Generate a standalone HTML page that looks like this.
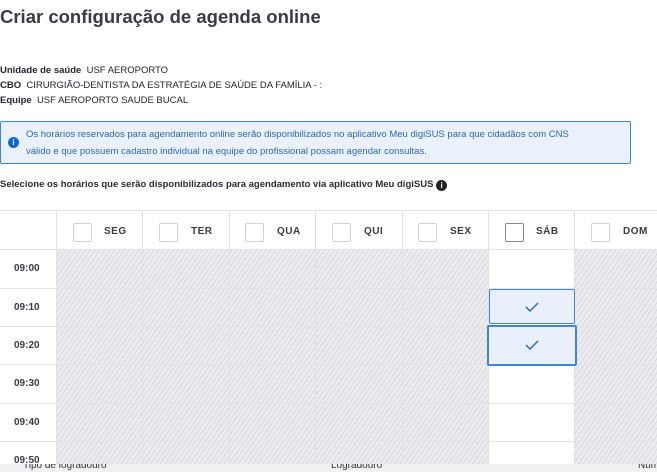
<!DOCTYPE html>
<html><head><meta charset="utf-8"><style>
*{margin:0;padding:0;box-sizing:border-box}
body{width:657px;height:472px;overflow:hidden;background:#fff;font-family:"Liberation Sans",sans-serif;color:#24252e;position:relative}
.a{position:absolute;white-space:nowrap}
.t{left:0;top:6px;font-size:18.5px;font-weight:bold;color:#3a3b44}
.m{font-size:9.5px;left:0}
.m b{font-weight:bold}
.info{left:0;top:121px;width:631px;height:43px;background:#ebf1fc;border:1px solid #3d87d9;border-radius:2px}
.info .tx{position:absolute;left:25px;top:4px;font-size:9.5px;line-height:17px;color:#2969b8}
.ic{position:absolute;left:7px;top:15px;width:11px;height:11px;border-radius:50%;background:#1068d0;color:#fff;font-size:8px;font-weight:bold;text-align:center;line-height:11px}
.hatch{background:repeating-linear-gradient(-55deg,#d6d7dc 0 1px,#ededf1 1px 4px)}
.vl{position:absolute;top:211px;width:1px;height:253px;background:#e0e0e4}
.hl{position:absolute;left:0;width:657px;height:1px;background:#e3e3e7}
.cb{position:absolute;top:223px;width:19px;height:19px;border:1px solid #d0d0d6;border-radius:2px;background:#fff}
.dl{position:absolute;top:226px;font-size:10px;font-weight:bold;color:#3a3b44;letter-spacing:.5px}
.tm{position:absolute;left:14px;font-size:10px;font-weight:bold;color:#3a3b44}
.sel{position:absolute;background:#e9f0fc;border:1px solid #3d87d9;border-radius:2px}
</style></head><body>
<div class="a t">Criar configuração de agenda online</div>
<div class="a m" style="top:65px"><b>Unidade de saúde</b>&nbsp; USF AEROPORTO</div>
<div class="a m" style="top:80px"><b>CBO</b>&nbsp; CIRURGIÃO-DENTISTA DA ESTRATÉGIA DE SAÚDE DA FAMÍLIA - :</div>
<div class="a m" style="top:95px"><b>Equipe</b>&nbsp; USF AEROPORTO SAUDE BUCAL</div>
<div class="a info"><div class="ic">i</div><div class="tx">Os horários reservados para agendamento online serão disponibilizados no aplicativo Meu digiSUS para que cidadãos com CNS<br>válido e que possuem cadastro individual na equipe do profissional possam agendar consultas.</div></div>
<div class="a" style="left:0;top:179px;font-size:9.5px;font-weight:bold;color:#2b2c35">Selecione os horários que serão disponibilizados para agendamento via aplicativo Meu digiSUS <span style="display:inline-block;width:11px;height:11px;border-radius:50%;background:#222;color:#fff;font-size:8px;text-align:center;line-height:11px;vertical-align:-1px">i</span></div>

<div class="a hatch" style="left:57px;top:249px;width:431px;height:215px"></div>
<div class="a hatch" style="left:575px;top:249px;width:82px;height:215px"></div>

<div class="hl" style="top:210px"></div>
<div class="hl" style="top:249px"></div>
<div class="hl" style="top:288px"></div>
<div class="hl" style="top:326px"></div>
<div class="hl" style="top:364px"></div>
<div class="hl" style="top:403px"></div>
<div class="hl" style="top:441px"></div>
<div class="vl" style="left:56px"></div>
<div class="vl" style="left:142px"></div>
<div class="vl" style="left:229px"></div>
<div class="vl" style="left:315px"></div>
<div class="vl" style="left:402px"></div>
<div class="vl" style="left:488px"></div>
<div class="vl" style="left:574px"></div>

<div class="cb" style="left:73px"></div><div class="dl" style="left:104px">SEG</div>
<div class="cb" style="left:159px"></div><div class="dl" style="left:191px">TER</div>
<div class="cb" style="left:245px"></div><div class="dl" style="left:277px">QUA</div>
<div class="cb" style="left:332px"></div><div class="dl" style="left:364px">QUI</div>
<div class="cb" style="left:418px"></div><div class="dl" style="left:450px">SEX</div>
<div class="cb" style="left:505px;border-color:#888"></div><div class="dl" style="left:536px">SÁB</div>
<div class="cb" style="left:591px"></div><div class="dl" style="left:623px">DOM</div>

<div class="tm" style="top:263px">09:00</div>
<div class="tm" style="top:302px">09:10</div>
<div class="tm" style="top:340px">09:20</div>
<div class="tm" style="top:378px">09:30</div>
<div class="tm" style="top:417px">09:40</div>
<div class="tm" style="top:455px">09:50</div>

<div class="sel" style="left:489px;top:289px;width:86px;height:35px"></div>
<div class="sel" style="left:487px;top:325px;width:90px;height:41px;border-width:2px"></div>
<svg class="a" style="left:525px;top:302px" width="14" height="10"><path d="M1 5 L5 9 L13 1" stroke="#2d6cc0" stroke-width="1.5" fill="none"/></svg>
<svg class="a" style="left:525px;top:340px" width="14" height="10"><path d="M1 5 L5 9 L13 1" stroke="#2d6cc0" stroke-width="1.5" fill="none"/></svg>

<div class="a" style="left:0;top:464px;width:657px;height:8px;background:#f1f1f3;overflow:hidden">
<div class="a" style="left:23px;top:-4px;font-size:10px;color:#333">Tipo de logradouro</div>
<div class="a" style="left:331px;top:-4px;font-size:10px;color:#333">Logradouro</div>
<div class="a" style="left:638px;top:-4px;font-size:10px;color:#333">Num</div>
</div>
</body></html>
